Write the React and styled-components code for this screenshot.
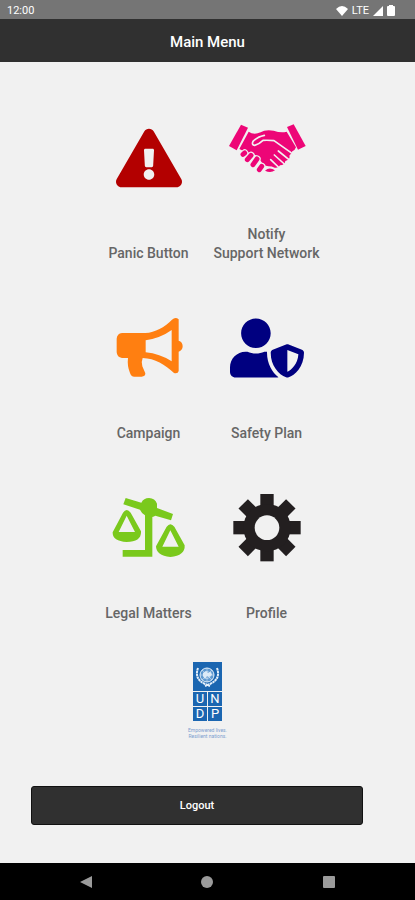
import React from 'react';

import styled, { createGlobalStyle } from 'styled-components';

import { FaExclamationTriangle, FaUserShield } from 'react-icons/fa';

const GlobalStyle = createGlobalStyle`
    * {
        box-sizing: border-box;
    }

    body {
        margin: 0;
        background-color: #f1f1f1;
        font-family: Roboto, "Liberation Sans", sans-serif;
    }
`;

const Screen = styled.div`
    display: flex;
    flex-direction: column;
    min-height: 100vh;
`;

const StatusBar = styled.div`
    display: flex;
    justify-content: space-between;
    align-items: center;
    height: 19px;
    padding: 2px 20px 0 7px;

    background-color: #757575;
    color: #fff;
    font-size: 11px;
`;

const StatusIcons = styled.div`
    display: flex;
    align-items: center;
    gap: 4px;
`;

const Header = styled.header`
    display: flex;
    justify-content: center;
    align-items: center;
    height: 43px;
    padding-top: 2px;

    background-color: #303030;
`;

const Title = styled.h1`
    margin: 0;

    color: #fff;
    font-size: 15px;
    font-weight: 500;
`;

const Content = styled.main`
    flex: 1;
    display: flex;
    flex-direction: column;
    align-items: center;
    padding: 56px 0 38px;
`;

const MenuGrid = styled.div`
    display: grid;
    grid-template-columns: repeat(2, 118px);
    row-gap: 45px;
`;

const MenuItem = styled.button`
    display: flex;
    flex-direction: column;
    align-items: center;
    padding: 0;

    border: none;
    background: none;
    color: ${(props) => props.$color};
    font-family: inherit;
    cursor: pointer;
`;

const IconBox = styled.span`
    display: flex;
    justify-content: center;
    align-items: center;
    width: 80px;
    height: 80px;
    margin-bottom: 27px;
`;

const Label = styled.span`
    flex: 1;
    display: flex;
    align-items: flex-end;
    min-height: 28px;

    color: #666;
    font-size: 14px;
    font-weight: 500;
    line-height: 19px;
    white-space: pre-line;
`;

const Logo = styled.div`
    display: grid;
    grid-template-columns: 14px 14px;
    gap: 1px;
    margin-top: 39px;
`;

const Emblem = styled.div`
    grid-column: span 2;
    height: 29px;

    background-color: #1b66b1;
`;

const LogoLetter = styled.span`
    height: 14px;

    background-color: #1b66b1;
    color: #fff;
    font-size: 13px;
    line-height: 14px;
    text-align: center;
`;

const Tagline = styled.p`
    margin: 6px 0 0;

    color: #7d9fd0;
    font-size: 5px;
    line-height: 6px;
    text-align: center;
`;

const LogoutButton = styled.button`
    align-self: flex-start;
    width: 80%;
    height: 39px;
    margin: auto 0 0 31px;

    border: 1px solid #111;
    border-radius: 3px;
    background-color: #303030;
    color: #fff;
    font-family: inherit;
    font-size: 11px;
    font-weight: 500;
    cursor: pointer;
`;

const NavBar = styled.nav`
    display: flex;
    justify-content: space-around;
    align-items: center;
    height: 37px;
    padding: 0 25px;

    background-color: #000;
`;

const NavButton = styled.button`
    display: flex;
    padding: 0;

    border: none;
    background: none;
    color: #9b9b9b;
`;

const HandshakeIcon = () => (
    <svg width="80" height="80" viewBox="50 24 240 240" fill="currentColor">
        <path d="M92 44L113 53L79 121L56 108Z" />
        <path d="M230 51L250 43L286 108L263 119Z" />
        <path d="M115 65Q130 76 151 67Q164 58 190 62Q212 70 229 65L257 112Q254 121 246 124Q242 132 237 137Q241 148 225 153Q224 165 209 166Q206 175 193 173Q185 169 174 169L160 166L141 137L101 124L87 117Z" />
        <path d="M164 182Q177 170 194 181Q181 190 164 182Z" />
        <g stroke="#f1f1f1" strokeWidth="5" fill="none" strokeLinecap="round" strokeLinejoin="round">
            <path d="M162 76Q141 80 128 94Q123 105 133 106Q147 102 158 91Q176 90 191 92L242 128" />
            <path d="M204 123L235 148M192 135L222 162M181 149L204 171" />
        </g>
        <g stroke="#f1f1f1" strokeWidth="22" strokeLinecap="round">
            <path d="M98 133L103 129M111 149L122 136M128 164L140 147M147 179L154 169" />
        </g>
        <g stroke="currentColor" strokeWidth="15" strokeLinecap="round">
            <path d="M98 133L103 129M111 149L122 136M128 164L140 147M147 179L154 169" />
        </g>
    </svg>
);

const MegaphoneIcon = () => (
    <svg width="80" height="80" viewBox="25 9 240 240" fill="currentColor">
        <path
            fillRule="evenodd"
            d="M64 84H134C164 82 191 67 214 44Q224 35 234 43V107Q246 111 246 124Q246 136 234 140V198Q232 207 220 204C193 180 163 160 126 159Q121 171 125 184L134 205Q134 215 123 215H101Q91 215 88 204Q79 182 82 159H64Q49 157 48 142V101Q49 86 64 84ZM135 106V142Q177 146 213 169V75Q180 99 135 106Z"
        />
    </svg>
);

const ScalesIcon = () => (
    <svg width="80" height="80" viewBox="28 9 240 240" fill="currentColor">
        <path d="M78 39L125 53Q132 39 148 39Q166 40 172 56V69L220 87L214 106L167 92Q163 94 158 96V215H69V195H136V91Q127 87 121 74L71 58Z" />
        <path
            fillRule="evenodd"
            d="M70 83Q81 67 93 83L124 139Q126 170 81 171Q38 168 39 142ZM81 92L57 141H106Z"
        />
        <path
            fillRule="evenodd"
            d="M201 125Q212 110 224 125L255 181Q257 212 212 216Q169 211 169 184ZM212 136L188 185H237Z"
        />
    </svg>
);

const GearIcon = () => (
    <svg width="80" height="80" viewBox="37 9 240 240">
        <g fill="#231f20">
            {[0, 45, 90, 135].map((angle) => (
                <rect key={angle} x="137" y="27" width="40" height="202" transform={`rotate(${angle} 157 128)`} />
            ))}
            <circle cx="157" cy="128" r="71" />
        </g>
        <circle cx="157" cy="128" r="37" fill="#f1f1f1" />
    </svg>
);

const GlobeEmblem = () => (
    <svg width="29" height="29" viewBox="0 0 29 29" fill="none" stroke="#e4effa">
        <circle cx="14" cy="13" r="7" fill="#5f99d0" strokeWidth="1" />
        <path d="M7 13H21M14 6V20M9 8L19 18M19 8L9 18" strokeWidth="0.5" />
        <circle cx="14" cy="13" r="3.5" strokeWidth="0.6" />
        <path d="M10 11L13 9L15 11L18 10L19 13L16 15L14 14L12 17L10 14Z" fill="#dceaf7" stroke="none" />
        <path d="M5 6Q1 17 12 22L17 24M24 6Q28 17 17 22L12 24" strokeWidth="2" strokeDasharray="2.4 0.5" />
    </svg>
);

const menuItems = [
    { label: 'Panic Button', color: '#b30000', icon: <FaExclamationTriangle size={66} /> },
    { label: 'Notify\nSupport Network', color: '#ed0677', icon: <HandshakeIcon /> },
    { label: 'Campaign', color: '#ff7f11', icon: <MegaphoneIcon /> },
    { label: 'Safety Plan', color: '#000080', icon: <FaUserShield size={74} /> },
    { label: 'Legal Matters', color: '#7ac91c', icon: <ScalesIcon /> },
    { label: 'Profile', color: '#231f20', icon: <GearIcon /> },
];

const App = () => {
    return (
        <Screen>
            <GlobalStyle />

            <StatusBar>
                <span>12:00</span>
                <StatusIcons>
                    <svg width="12" height="10" viewBox="0 0 12 10" fill="#fff">
                        <path d="M0 3Q6 -3 12 3L6 10Z" />
                    </svg>
                    <span>LTE</span>
                    <svg width="10" height="10" viewBox="0 0 10 10" fill="#fff">
                        <path d="M10 0V10H0Z" />
                    </svg>
                    <svg width="8" height="11" viewBox="0 0 8 11" fill="#fff">
                        <path d="M2 0H6V1H7Q8 1 8 2V10Q8 11 7 11H1Q0 11 0 10V2Q0 1 1 1H2Z" />
                    </svg>
                </StatusIcons>
            </StatusBar>

            <Header>
                <Title>Main Menu</Title>
            </Header>

            <Content>
                <MenuGrid>
                    {menuItems.map((item) => (
                        <MenuItem key={item.label} $color={item.color}>
                            <IconBox>{item.icon}</IconBox>
                            <Label>{item.label}</Label>
                        </MenuItem>
                    ))}
                </MenuGrid>

                <Logo>
                    <Emblem>
                        <GlobeEmblem />
                    </Emblem>
                    <LogoLetter>U</LogoLetter>
                    <LogoLetter>N</LogoLetter>
                    <LogoLetter>D</LogoLetter>
                    <LogoLetter>P</LogoLetter>
                </Logo>
                <Tagline>
                    Empowered lives.
                    <br />
                    Resilient nations.
                </Tagline>

                <LogoutButton>Logout</LogoutButton>
            </Content>

            <NavBar>
                <NavButton aria-label="Back">
                    <svg width="12" height="12" viewBox="0 0 12 12" fill="currentColor">
                        <path d="M12 0V12L0 6Z" />
                    </svg>
                </NavButton>
                <NavButton aria-label="Home">
                    <svg width="12" height="12" viewBox="0 0 12 12" fill="currentColor">
                        <circle cx="6" cy="6" r="6" />
                    </svg>
                </NavButton>
                <NavButton aria-label="Recent apps">
                    <svg width="12" height="12" viewBox="0 0 12 12" fill="currentColor">
                        <rect width="12" height="12" rx="1" />
                    </svg>
                </NavButton>
            </NavBar>
        </Screen>
    )
}

export default App
